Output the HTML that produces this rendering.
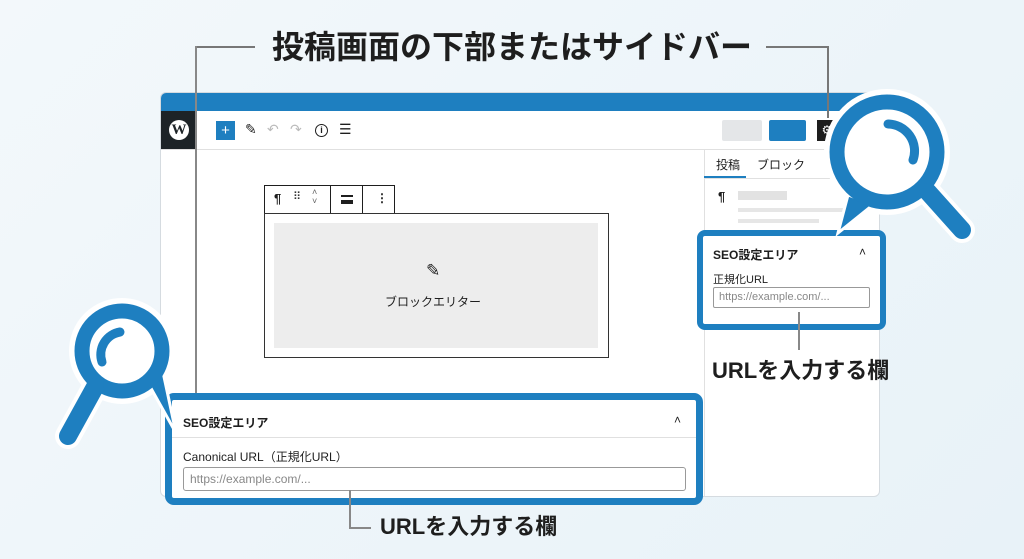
<!DOCTYPE html>
<html><head><meta charset="utf-8"><style>
*{margin:0;padding:0;box-sizing:border-box}
body{width:1024px;height:559px;overflow:hidden;background:linear-gradient(135deg,#f3f8fb,#e8f2f8);font-family:"Liberation Sans","Noto Sans CJK JP",sans-serif;position:relative;color:#1e1e1e}
.a{position:absolute}
.t{font-weight:700}
</style></head><body>
<div class="a t" style="left:262px;top:27px;width:500px;text-align:center;font-size:32px;line-height:40px;color:#1e1e1e">投稿画面の下部またはサイドバー</div>

<div class="a" style="left:160px;top:92px;width:720px;height:405px;background:#fff;border:1px solid #d5dbe0;border-radius:6px;overflow:hidden">
 <div class="a" style="left:0;top:0;width:720px;height:18px;background:#1e7fc0"></div>
 <div class="a" style="left:0;top:18px;width:36px;height:38px;background:#1d2327"></div>
 <div class="a" style="left:8px;top:27px;width:20px;height:20px;border-radius:50%;background:#fff;color:#1d2327;font:700 15px/20px 'Liberation Serif',serif;text-align:center">W</div>
 <div class="a" style="left:0;top:56px;width:720px;height:1px;background:#e0e0e0"></div>
 <div class="a" style="left:55px;top:28px;width:19px;height:19px;background:#1e7fc0;color:#fff;font-size:15px;line-height:19px;text-align:center">+</div>
 <div class="a" style="left:84px;top:28px;font-size:14px">✎</div>
 <div class="a" style="left:106px;top:28px;font-size:14px;color:#bbb">↶</div>
 <div class="a" style="left:129px;top:28px;font-size:14px;color:#bbb">↷</div>
 <div class="a" style="left:154px;top:31px;width:13px;height:13px;border:1.6px solid #1e1e1e;border-radius:50%;font-size:9px;line-height:10px;text-align:center;font-weight:700">i</div>
 <div class="a" style="left:178px;top:28px;font-size:14px">☰</div>
 <div class="a" style="left:561px;top:27px;width:40px;height:21px;background:#e4e6e8;border-radius:2px"></div>
 <div class="a" style="left:608px;top:27px;width:37px;height:21px;background:#1e7fc0;border-radius:2px"></div>
 <div class="a" style="left:656px;top:27px;width:20px;height:21px;background:#1e1e1e;color:#fff;font-size:12px;text-align:center;line-height:21px">⚙</div>
 <div class="a" style="left:543px;top:56px;width:1px;height:350px;background:#e0e0e0"></div>
 <div class="a" style="left:555px;top:63px;font-size:12px">投稿</div>
 <div class="a" style="left:596px;top:63px;font-size:12px">ブロック</div>
 <div class="a" style="left:543px;top:83px;width:42px;height:2px;background:#1e7fc0"></div>
 <div class="a" style="left:543px;top:85px;width:177px;height:1px;background:#e0e0e0"></div>
 <div class="a" style="left:698px;top:63px;font-size:12px;color:#aaa">×</div>
 <div class="a t" style="left:557px;top:96px;font-size:13px">¶</div>
 <div class="a" style="left:577px;top:98px;width:49px;height:9px;background:#e2e2e2"></div>
 <div class="a" style="left:577px;top:115px;width:106px;height:4px;background:#e6e6e6"></div>
 <div class="a" style="left:577px;top:126px;width:81px;height:4px;background:#e6e6e6"></div>
 <div class="a" style="left:103px;top:92px;width:131px;height:29px;border:1px solid #1e1e1e;background:#fff"></div>
 <div class="a" style="left:169px;top:92px;width:1px;height:29px;background:#1e1e1e"></div>
 <div class="a" style="left:201px;top:92px;width:1px;height:29px;background:#1e1e1e"></div>
 <div class="a t" style="left:113px;top:98px;font-size:13px">¶</div>
 <div class="a" style="left:132px;top:97px;font-size:11px;color:#333">⠿</div>
 <div class="a" style="left:151px;top:95px;font-size:9px;line-height:9px;color:#666">˄<br>˅</div>
 <div class="a" style="left:180px;top:102px;width:12px;height:9px;border-top:2px solid #1e1e1e;border-bottom:2px solid #1e1e1e;background:linear-gradient(#1e1e1e,#1e1e1e) 0 2.5px/12px 2px no-repeat"></div>
 <div class="a t" style="left:215px;top:98px;font-size:12px">⋮</div>
 <div class="a" style="left:103px;top:120px;width:345px;height:145px;border:1px solid #333;background:#fff"></div>
 <div class="a" style="left:113px;top:130px;width:324px;height:125px;background:#ededed"></div>
 <div class="a" style="left:265px;top:168px;font-size:17px">✎</div>
 <div class="a" style="left:224px;top:200px;font-size:12px">ブロックエリター</div>
</div>

<div class="a" style="left:195px;top:46px;width:60px;height:2px;background:#777"></div>
<div class="a" style="left:195px;top:46px;width:2px;height:350px;background:#888"></div>
<div class="a" style="left:766px;top:46px;width:63px;height:2px;background:#777"></div>
<div class="a" style="left:827px;top:46px;width:2px;height:72px;background:#777"></div>

<div class="a" style="left:697px;top:230px;width:189px;height:100px;border:6px solid #1e7fc0;border-radius:8px;background:#fff"></div>
<div class="a t" style="left:713px;top:246px;font-size:12px">SEO設定エリア</div>
<div class="a" style="left:859px;top:245px;font-size:12px">˄</div>
<div class="a" style="left:713px;top:271px;font-size:11px">正規化URL</div>
<div class="a" style="left:713px;top:287px;width:157px;height:21px;border:1px solid #999;border-radius:2px;font-size:11px;color:#888;padding:3px 5px">https://example.com/...</div>
<div class="a" style="left:798px;top:312px;width:2px;height:38px;background:#888"></div>
<div class="a t" style="left:712px;top:357px;font-size:22px;line-height:28px">URLを入力する欄</div>

<div class="a" style="left:165px;top:393px;width:538px;height:112px;border:7px solid #1e7fc0;border-radius:9px;background:#fff"></div>
<div class="a" style="left:172px;top:437px;width:524px;height:1px;background:#e0e0e0"></div>
<div class="a t" style="left:183px;top:414px;font-size:12px">SEO設定エリア</div>
<div class="a" style="left:674px;top:413px;font-size:12px">˄</div>
<div class="a" style="left:183px;top:448px;font-size:12px">Canonical URL（正規化URL）</div>
<div class="a" style="left:183px;top:467px;width:503px;height:24px;border:1px solid #999;border-radius:3px;font-size:12px;color:#888;padding:4px 6px">https://example.com/...</div>
<div class="a" style="left:349px;top:490px;width:2px;height:39px;background:#888"></div>
<div class="a" style="left:349px;top:527px;width:22px;height:2px;background:#888"></div>
<div class="a t" style="left:380px;top:513px;font-size:22px;line-height:28px">URLを入力する欄</div>

<svg class="a" style="left:0;top:0" width="1024" height="559">
 <g stroke="#fff" stroke-width="26" fill="none" stroke-linecap="round">
  <circle cx="887" cy="152" r="50"/><line x1="928" y1="192" x2="962" y2="230"/>
  <circle cx="122" cy="351" r="40"/><line x1="95" y1="387" x2="68" y2="436"/>
 </g>
 <polygon points="848,195 874,204 838,233" fill="#1e7fc0" stroke="#fff" stroke-width="3"/>
 <polygon points="148,383 163,372 176,433" fill="#1e7fc0" stroke="#fff" stroke-width="3"/>
 <g stroke="#1e7fc0" fill="none" stroke-linecap="round">
  <circle cx="887" cy="152" r="50" stroke-width="15" fill="#fff"/>
  <line x1="928" y1="192" x2="962" y2="230" stroke-width="18"/>
  <path d="M888 124 A27 27 0 0 1 913 160" stroke-width="9"/>
  <circle cx="122" cy="351" r="40" stroke-width="15" fill="#fff"/>
  <line x1="95" y1="387" x2="68" y2="436" stroke-width="18"/>
  <path d="M102 362 A23 23 0 0 1 120 332" stroke-width="9"/>
 </g>
</svg>
</body></html>
